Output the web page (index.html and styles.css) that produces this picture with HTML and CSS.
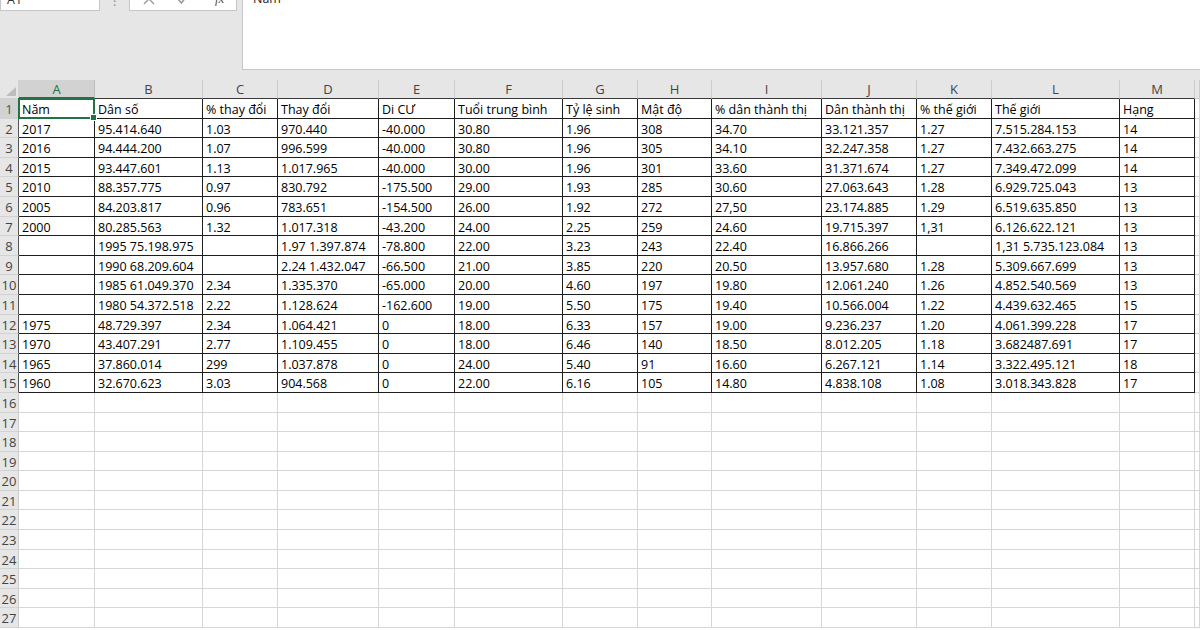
FILE: index.html
```html
<!DOCTYPE html>
<html lang="vi">
<head>
<meta charset="utf-8">
<title>Dân số</title>
<link rel="stylesheet" href="styles.css">
</head>
<body>
<div class="top">
  <div class="namebox">A1</div>
  <div class="dots">⁝</div>
  <div class="fxbox">
    <svg class="ic" width="12" height="12" viewBox="0 0 12 12"><path d="M1 1L11 11M11 1L1 11" stroke="#9a9a9a" stroke-width="1.4" fill="none"/></svg>
    <svg class="ic" width="12" height="12" viewBox="0 0 12 12"><path d="M1 6L4.5 10L11 1" stroke="#9a9a9a" stroke-width="1.6" fill="none"/></svg>
    <span class="fx">fx</span>
  </div>
  <div class="formula">Năm</div>
</div>
<div class="sheet">
  <div class="corner"><svg width="19" height="19" viewBox="0 0 19 19"><path d="M6 16L16 16L16 7Z" fill="#bdbdbd"/></svg></div>
  <div class="ch csel">A</div><div class="ch">B</div><div class="ch">C</div><div class="ch">D</div><div class="ch">E</div><div class="ch">F</div><div class="ch">G</div><div class="ch">H</div><div class="ch">I</div><div class="ch">J</div><div class="ch">K</div><div class="ch">L</div><div class="ch">M</div><div class="ch last"></div>

  <div class="rh rb rsel">1</div><div class="d sel">Năm</div><div class="d">Dân số</div><div class="d">% thay đổi</div><div class="d">Thay đổi</div><div class="d">Di CƯ</div><div class="d">Tuổi trung bình</div><div class="d">Tỷ lệ sinh</div><div class="d">Mật độ</div><div class="d">% dân thành thị</div><div class="d">Dân thành thị</div><div class="d">% thế giới</div><div class="d">Thế giới</div><div class="d">Hạng</div><div></div>

  <div class="rh rb">2</div><div class="d">2017</div><div class="d">95.414.640</div><div class="d">1.03</div><div class="d">970.440</div><div class="d">-40.000</div><div class="d">30.80</div><div class="d">1.96</div><div class="d">308</div><div class="d">34.70</div><div class="d">33.121.357</div><div class="d">1.27</div><div class="d">7.515.284.153</div><div class="d">14</div><div></div>

  <div class="rh rb">3</div><div class="d">2016</div><div class="d">94.444.200</div><div class="d">1.07</div><div class="d">996.599</div><div class="d">-40.000</div><div class="d">30.80</div><div class="d">1.96</div><div class="d">305</div><div class="d">34.10</div><div class="d">32.247.358</div><div class="d">1.27</div><div class="d">7.432.663.275</div><div class="d">14</div><div></div>

  <div class="rh rb">4</div><div class="d">2015</div><div class="d">93.447.601</div><div class="d">1.13</div><div class="d">1.017.965</div><div class="d">-40.000</div><div class="d">30.00</div><div class="d">1.96</div><div class="d">301</div><div class="d">33.60</div><div class="d">31.371.674</div><div class="d">1.27</div><div class="d">7.349.472.099</div><div class="d">14</div><div></div>

  <div class="rh rb">5</div><div class="d">2010</div><div class="d">88.357.775</div><div class="d">0.97</div><div class="d">830.792</div><div class="d">-175.500</div><div class="d">29.00</div><div class="d">1.93</div><div class="d">285</div><div class="d">30.60</div><div class="d">27.063.643</div><div class="d">1.28</div><div class="d">6.929.725.043</div><div class="d">13</div><div></div>

  <div class="rh rb">6</div><div class="d">2005</div><div class="d">84.203.817</div><div class="d">0.96</div><div class="d">783.651</div><div class="d">-154.500</div><div class="d">26.00</div><div class="d">1.92</div><div class="d">272</div><div class="d">27,50</div><div class="d">23.174.885</div><div class="d">1.29</div><div class="d">6.519.635.850</div><div class="d">13</div><div></div>

  <div class="rh rb">7</div><div class="d">2000</div><div class="d">80.285.563</div><div class="d">1.32</div><div class="d">1.017.318</div><div class="d">-43.200</div><div class="d">24.00</div><div class="d">2.25</div><div class="d">259</div><div class="d">24.60</div><div class="d">19.715.397</div><div class="d">1,31</div><div class="d">6.126.622.121</div><div class="d">13</div><div></div>

  <div class="rh rb">8</div><div class="d"></div><div class="d">1995 75.198.975</div><div class="d"></div><div class="d">1.97 1.397.874</div><div class="d">-78.800</div><div class="d">22.00</div><div class="d">3.23</div><div class="d">243</div><div class="d">22.40</div><div class="d">16.866.266</div><div class="d"></div><div class="d">1,31 5.735.123.084</div><div class="d">13</div><div></div>

  <div class="rh rb">9</div><div class="d"></div><div class="d">1990 68.209.604</div><div class="d"></div><div class="d">2.24 1.432.047</div><div class="d">-66.500</div><div class="d">21.00</div><div class="d">3.85</div><div class="d">220</div><div class="d">20.50</div><div class="d">13.957.680</div><div class="d">1.28</div><div class="d">5.309.667.699</div><div class="d">13</div><div></div>

  <div class="rh rb">10</div><div class="d"></div><div class="d">1985 61.049.370</div><div class="d">2.34</div><div class="d">1.335.370</div><div class="d">-65.000</div><div class="d">20.00</div><div class="d">4.60</div><div class="d">197</div><div class="d">19.80</div><div class="d">12.061.240</div><div class="d">1.26</div><div class="d">4.852.540.569</div><div class="d">13</div><div></div>

  <div class="rh rb">11</div><div class="d"></div><div class="d">1980 54.372.518</div><div class="d">2.22</div><div class="d">1.128.624</div><div class="d">-162.600</div><div class="d">19.00</div><div class="d">5.50</div><div class="d">175</div><div class="d">19.40</div><div class="d">10.566.004</div><div class="d">1.22</div><div class="d">4.439.632.465</div><div class="d">15</div><div></div>

  <div class="rh rb">12</div><div class="d">1975</div><div class="d">48.729.397</div><div class="d">2.34</div><div class="d">1.064.421</div><div class="d">0</div><div class="d">18.00</div><div class="d">6.33</div><div class="d">157</div><div class="d">19.00</div><div class="d">9.236.237</div><div class="d">1.20</div><div class="d">4.061.399.228</div><div class="d">17</div><div></div>

  <div class="rh rb">13</div><div class="d">1970</div><div class="d">43.407.291</div><div class="d">2.77</div><div class="d">1.109.455</div><div class="d">0</div><div class="d">18.00</div><div class="d">6.46</div><div class="d">140</div><div class="d">18.50</div><div class="d">8.012.205</div><div class="d">1.18</div><div class="d">3.682487.691</div><div class="d">17</div><div></div>

  <div class="rh rb">14</div><div class="d">1965</div><div class="d">37.860.014</div><div class="d">299</div><div class="d">1.037.878</div><div class="d">0</div><div class="d">24.00</div><div class="d">5.40</div><div class="d">91</div><div class="d">16.60</div><div class="d">6.267.121</div><div class="d">1.14</div><div class="d">3.322.495.121</div><div class="d">18</div><div></div>

  <div class="rh rb">15</div><div class="d">1960</div><div class="d">32.670.623</div><div class="d">3.03</div><div class="d">904.568</div><div class="d">0</div><div class="d">22.00</div><div class="d">6.16</div><div class="d">105</div><div class="d">14.80</div><div class="d">4.838.108</div><div class="d">1.08</div><div class="d">3.018.343.828</div><div class="d">17</div><div></div>

  <div class="rh">16</div><div></div><div></div><div></div><div></div><div></div><div></div><div></div><div></div><div></div><div></div><div></div><div></div><div></div><div></div>
  <div class="rh">17</div><div></div><div></div><div></div><div></div><div></div><div></div><div></div><div></div><div></div><div></div><div></div><div></div><div></div><div></div>
  <div class="rh">18</div><div></div><div></div><div></div><div></div><div></div><div></div><div></div><div></div><div></div><div></div><div></div><div></div><div></div><div></div>
  <div class="rh">19</div><div></div><div></div><div></div><div></div><div></div><div></div><div></div><div></div><div></div><div></div><div></div><div></div><div></div><div></div>
  <div class="rh">20</div><div></div><div></div><div></div><div></div><div></div><div></div><div></div><div></div><div></div><div></div><div></div><div></div><div></div><div></div>
  <div class="rh">21</div><div></div><div></div><div></div><div></div><div></div><div></div><div></div><div></div><div></div><div></div><div></div><div></div><div></div><div></div>
  <div class="rh">22</div><div></div><div></div><div></div><div></div><div></div><div></div><div></div><div></div><div></div><div></div><div></div><div></div><div></div><div></div>
  <div class="rh">23</div><div></div><div></div><div></div><div></div><div></div><div></div><div></div><div></div><div></div><div></div><div></div><div></div><div></div><div></div>
  <div class="rh">24</div><div></div><div></div><div></div><div></div><div></div><div></div><div></div><div></div><div></div><div></div><div></div><div></div><div></div><div></div>
  <div class="rh">25</div><div></div><div></div><div></div><div></div><div></div><div></div><div></div><div></div><div></div><div></div><div></div><div></div><div></div><div></div>
  <div class="rh">26</div><div></div><div></div><div></div><div></div><div></div><div></div><div></div><div></div><div></div><div></div><div></div><div></div><div></div><div></div>
  <div class="rh">27</div><div></div><div></div><div></div><div></div><div></div><div></div><div></div><div></div><div></div><div></div><div></div><div></div><div></div><div></div>
</div>
</body>
</html>
```
FILE: styles.css
```css
html, body {
  margin: 0;
  padding: 0;
}
body {
  width: 1200px;
  height: 630px;
  overflow: hidden;
  background: #ffffff;
  font-family: "Open Sans", "Noto Sans", sans-serif;
  color: #000;
}

/* formula bar band */
.top {
  height: 80px;
  background: #e6e6e6;
  display: flex;
  align-items: flex-start;
}
.namebox {
  box-sizing: border-box;
  width: 100px;
  height: 22px;
  margin-top: -11px;
  background: #fff;
  border: 1px solid #c6c6c6;
  font-size: 12.5px;
  line-height: 20px;
  padding-left: 6px;
  color: #333;
}
.dots {
  width: 29px;
  text-align: center;
  color: #8a8a8a;
  font-size: 12px;
  line-height: 8px;
  margin-top: -2px;
}
.fxbox {
  box-sizing: border-box;
  width: 108px;
  height: 22px;
  margin-top: -11px;
  background: #fff;
  border: 1px solid #c6c6c6;
  display: flex;
  align-items: flex-start;
  padding: 2px 0 0 13px;
  gap: 22px;
}
.ic {
  margin-top: 1px;
}
.fx {
  font-family: "Liberation Serif", serif;
  font-style: italic;
  font-size: 13px;
  line-height: 14px;
  color: #555;
  margin-left: 4px;
}
.formula {
  flex: 1;
  box-sizing: border-box;
  height: 81px;
  margin-top: -11px;
  margin-left: 5px;
  background: #fff;
  border-left: 1px solid #c6c6c6;
  border-bottom: 1px solid #c6c6c6;
  padding: 2px 10px;
  font-size: 12.5px;
  line-height: 16px;
  color: #222;
}

/* sheet grid */
.sheet {
  display: grid;
  grid-template-columns: 19px 76px 108px 75px 101px 76px 108px 75px 74px 110px 95px 75px 128px 75px 1fr;
  grid-template-rows: 19px;
  grid-auto-rows: 19.6px;
}
.sheet > div {
  box-sizing: border-box;
  border-right: 1px solid #d6d6d6;
  border-bottom: 1px solid #d6d6d6;
  font-size: 12.5px;
  line-height: 19px;
  padding: 1px 0 0 3px;
  white-space: nowrap;
  overflow: hidden;
  color: #000;
}
.sheet > .corner {
  background: #e6e6e6;
  padding: 0;
  border-right: 1px solid #cfcfcf;
  border-bottom: 1px solid #cfcfcf;
}
.corner svg {
  display: block;
}
.sheet > .ch {
  background: #e6e6e6;
  border-right: 1px solid #cccccc;
  border-bottom: 1px solid #3a3a3a;
  text-align: center;
  padding: 0;
  color: #444;
  font-size: 13px;
  line-height: 18px;
}
.sheet > .ch.last {
  border-bottom: 1px solid #cfcfcf;
}
.sheet > .ch.csel {
  background: #d2d2d2;
  color: #217346;
  border-bottom: 2px solid #217346;
  border-right-color: #bdbdbd;
}
.sheet > .rh {
  background: #e6e6e6;
  border-right: 1px solid #cccccc;
  border-bottom: 1px solid #d2d2d2;
  text-align: center;
  padding: 1px 0 0;
  color: #444;
  font-size: 13px;
  line-height: 18px;
}
.sheet > .rh.rb {
  border-right-color: #555;
}
.sheet > .rh.rsel {
  background: #d2d2d2;
  color: #217346;
}
.sheet > .d {
  border-right: 1px solid #1e1e1e;
  border-bottom: 1px solid #1e1e1e;
}
.sheet > .sel {
  position: relative;
  overflow: visible;
}
.sel::after {
  content: "";
  position: absolute;
  left: -1px;
  top: -1px;
  right: -1px;
  bottom: -1px;
  border: 2px solid #217346;
}
.sel::before {
  content: "";
  position: absolute;
  right: -3px;
  bottom: -3px;
  width: 5px;
  height: 5px;
  background: #217346;
  border: 1px solid #fff;
  z-index: 2;
}
```
